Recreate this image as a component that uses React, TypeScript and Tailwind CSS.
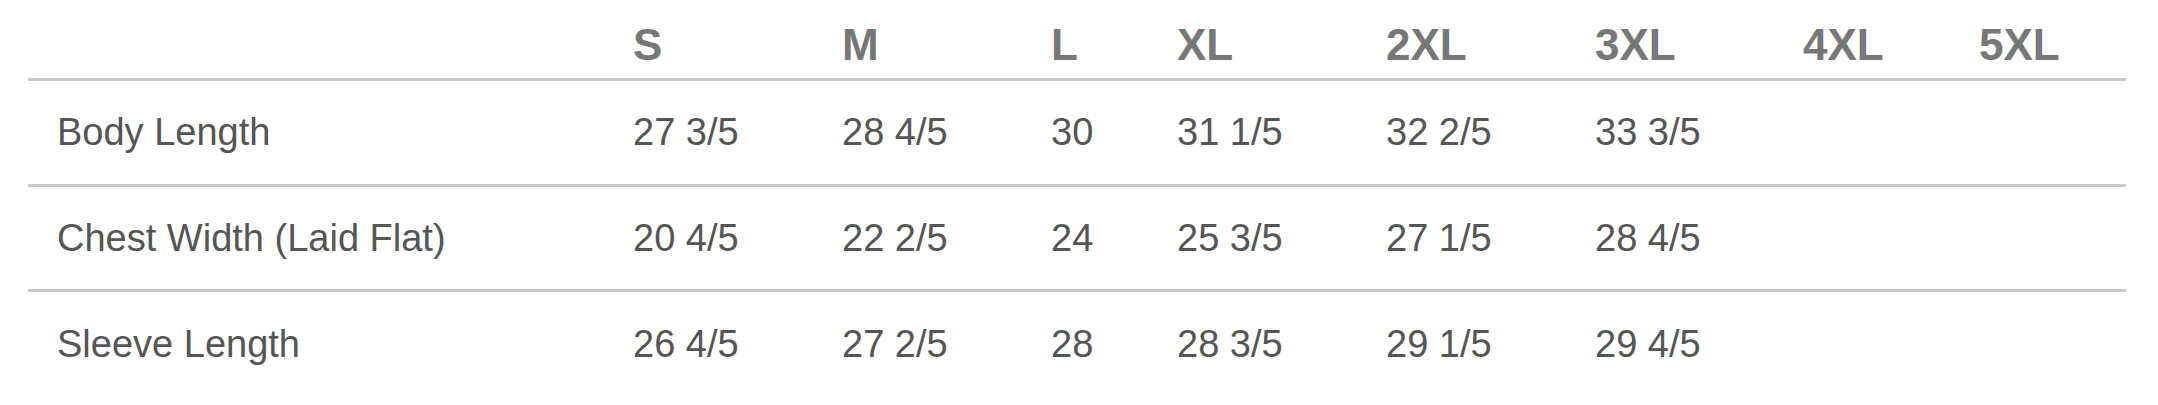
const sizes = ["S", "M", "L", "XL", "2XL", "3XL", "4XL", "5XL"];

// measurements in inches, blanks for sizes that don't exist
const rows: { label: string; values: string[] }[] = [
  { label: "Body Length", values: ["27 3/5", "28 4/5", "30", "31 1/5", "32 2/5", "33 3/5", "", ""] },
  { label: "Chest Width (Laid Flat)", values: ["20 4/5", "22 2/5", "24", "25 3/5", "27 1/5", "28 4/5", "", ""] },
  { label: "Sleeve Length", values: ["26 4/5", "27 2/5", "28", "28 3/5", "29 1/5", "29 4/5", "", ""] }
];

const SizeChart = () => {
  return (
    <div className="min-h-[405px] w-full bg-white pl-[28px] font-['Liberation_Sans',Arial,sans-serif]">
      <table className="w-[2098px] table-fixed border-collapse">
        <colgroup>
          <col className="w-[576px]" />
          <col className="w-[209px]" />
          <col className="w-[209px]" />
          <col className="w-[126px]" />
          <col className="w-[209px]" />
          <col className="w-[209px]" />
          <col className="w-[208px]" />
          <col className="w-[176px]" />
          <col className="w-[176px]" />
        </colgroup>
        <thead>
          <tr className="border-b-[3px] border-[#c9c9c9]">
            <th className="pl-[29px] pt-[23px] pb-[11px]" />
            {sizes.map(size => (
              <th
                key={size}
                className="pl-[29px] pt-[23px] pb-[11px] text-left text-[44px] leading-[44px] font-bold text-[#777777]"
              >
                {size}
              </th>
            ))}
          </tr>
        </thead>
        <tbody>
          {rows.map((row, i) => (
            <tr key={row.label} className={i < rows.length - 1 ? "border-b-[3px] border-[#c9c9c9]" : ""}>
              <td className="h-[105.5px] pl-[29px] align-middle text-[38px] leading-[38px] text-[#555555]">
                {row.label}
              </td>
              {row.values.map((value, j) => (
                <td
                  key={sizes[j]}
                  className="h-[105.5px] pl-[29px] align-middle text-[38px] leading-[38px] text-[#555555]"
                >
                  {value}
                </td>
              ))}
            </tr>
          ))}
        </tbody>
      </table>
    </div>
  );
};

export default function App() {
  return <SizeChart />;
}
